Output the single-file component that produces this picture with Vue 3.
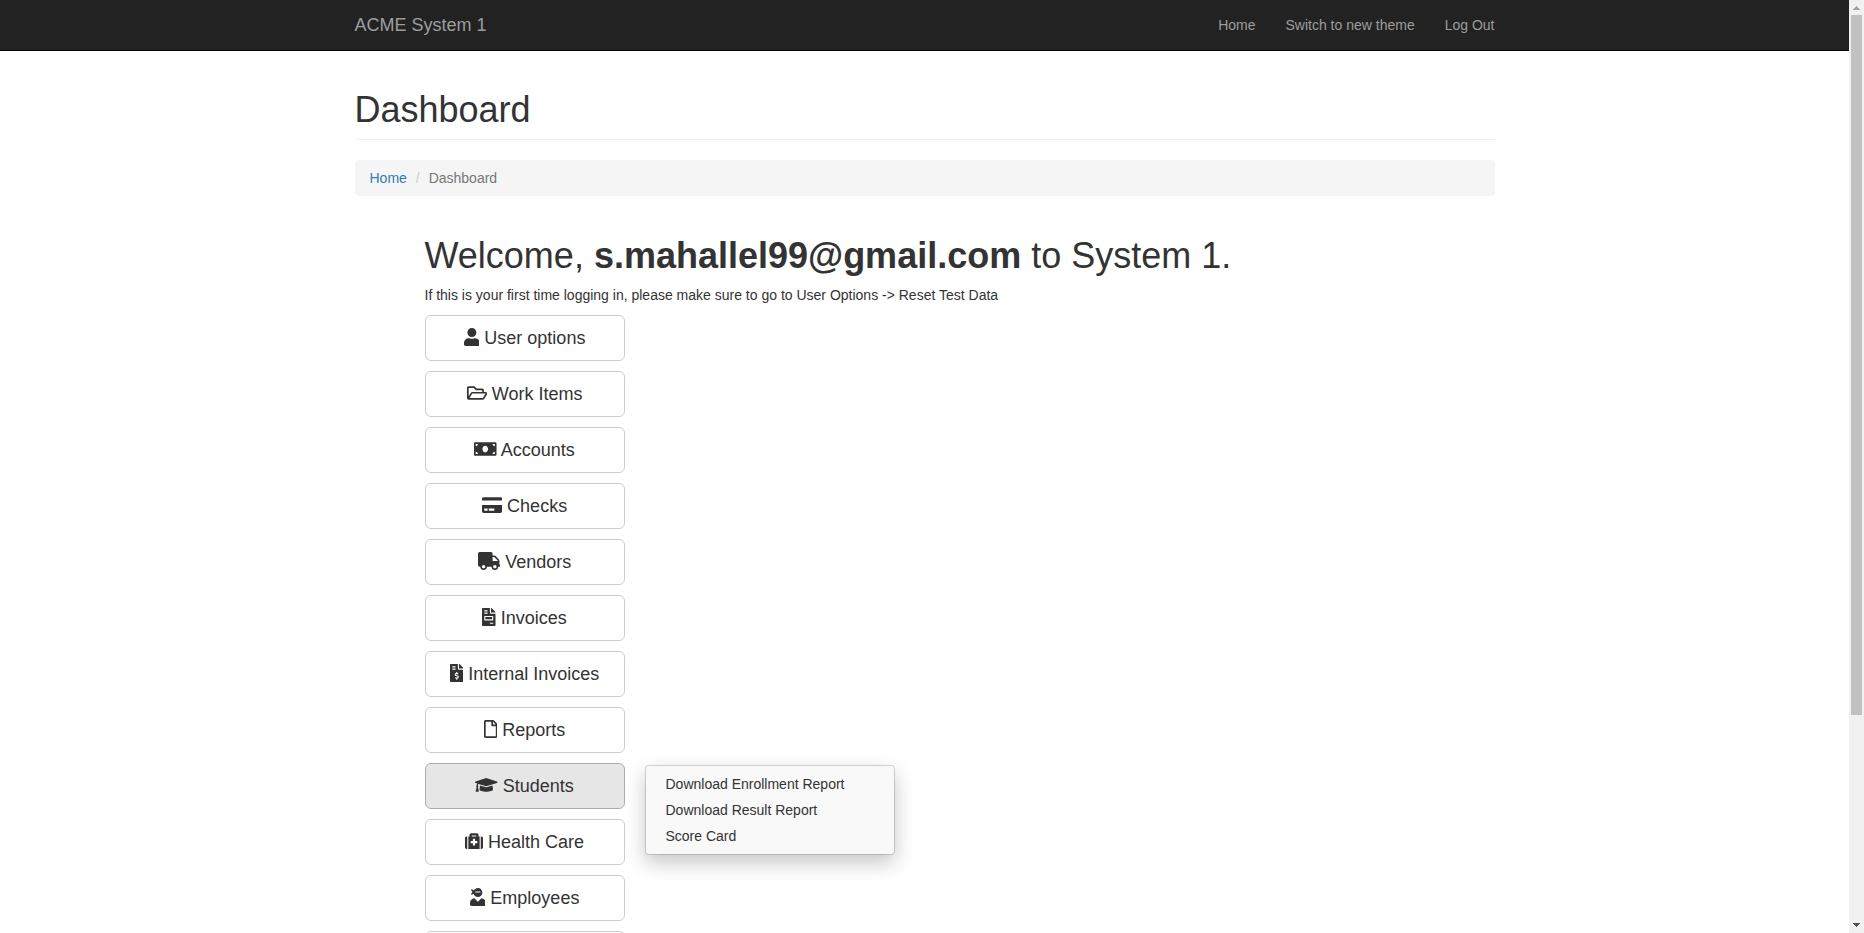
<script setup>
const navLinks = ['Home', 'Switch to new theme', 'Log Out']

const reports = ['Download Enrollment Report', 'Download Result Report', 'Score Card']

const sections = [
  {
    label: 'User options',
    width: 448,
    path: 'M224 256c70.7 0 128-57.3 128-128S294.7 0 224 0 96 57.3 96 128s57.3 128 128 128zm89.6 32h-16.7c-22.2 10.2-46.9 16-72.9 16s-50.6-5.8-72.9-16h-16.7C60.2 288 0 348.2 0 422.4V464c0 26.5 21.5 48 48 48h352c26.5 0 48-21.5 48-48v-41.6c0-74.2-60.2-134.4-134.4-134.4z',
  },
  {
    label: 'Work Items',
    width: 576,
    path: 'M527.9 224H480v-48c0-26.5-21.5-48-48-48H272l-64-64H48C21.5 64 0 85.5 0 112v288c0 26.5 21.5 48 48 48h400c16.5 0 31.9-8.5 40.7-22.6l79.9-128c20-31.9-3-73.4-40.7-73.4zM48 118c0-3.3 2.7-6 6-6h134.1l64 64H426c3.3 0 6 2.7 6 6v42H152c-16.8 0-32.4 8.8-41.1 23.2L48 351.4zm400 282H72l77.2-128H528z',
  },
  {
    label: 'Accounts',
    width: 640,
    path: 'M608 64H32C14.33 64 0 78.33 0 96v320c0 17.67 14.33 32 32 32h576c17.67 0 32-14.33 32-32V96c0-17.67-14.33-32-32-32zM48 400v-64c35.35 0 64 28.65 64 64H48zm0-224v-64h64c0 35.35-28.65 64-64 64zm272 176c-44.19 0-80-42.99-80-96 0-53.02 35.82-96 80-96s80 42.98 80 96c0 53.03-35.83 96-80 96zm272 48h-64c0-35.35 28.65-64 64-64v64zm0-224c-35.35 0-64-28.65-64-64h64v64z',
  },
  {
    label: 'Checks',
    width: 576,
    path: 'M0 432c0 26.5 21.5 48 48 48h480c26.5 0 48-21.5 48-48V256H0v176zm192-68c0-6.6 5.4-12 12-12h136c6.6 0 12 5.4 12 12v40c0 6.6-5.4 12-12 12H204c-6.6 0-12-5.4-12-12v-40zm-128 0c0-6.6 5.4-12 12-12h72c6.6 0 12 5.4 12 12v40c0 6.6-5.4 12-12 12H76c-6.6 0-12-5.4-12-12v-40zM576 80v48H0V80c0-26.5 21.5-48 48-48h480c26.5 0 48 21.5 48 48z',
  },
  {
    label: 'Vendors',
    width: 640,
    path: 'M624 352h-16V243.9c0-12.7-5.1-24.9-14.1-33.9L494 110.1c-9-9-21.2-14.1-33.9-14.1H416V48c0-26.5-21.5-48-48-48H48C21.5 0 0 21.5 0 48v320c0 26.5 21.5 48 48 48h16c0 53 43 96 96 96s96-43 96-96h128c0 53 43 96 96 96s96-43 96-96h48c8.8 0 16-7.2 16-16v-32c0-8.8-7.2-16-16-16zM160 464c-26.5 0-48-21.5-48-48s21.5-48 48-48 48 21.5 48 48-21.5 48-48 48zm320 0c-26.5 0-48-21.5-48-48s21.5-48 48-48 48 21.5 48 48-21.5 48-48 48zm80-208H416V144h44.1l99.9 99.9V256z',
  },
  {
    label: 'Invoices',
    width: 384,
    path: 'M288 256H96v64h192v-64zm89-151L279.1 7c-4.5-4.5-10.6-7-17-7H256v128h128v-6.1c0-6.3-2.5-12.4-7-16.9zm-153 31V0H24C10.7 0 0 10.7 0 24v464c0 13.3 10.7 24 24 24h336c13.3 0 24-10.7 24-24V160H248c-13.2 0-24-10.8-24-24zM64 72c0-4.42 3.58-8 8-8h80c4.42 0 8 3.58 8 8v16c0 4.42-3.58 8-8 8H72c-4.42 0-8-3.58-8-8V72zm0 64c0-4.42 3.58-8 8-8h80c4.42 0 8 3.58 8 8v16c0 4.42-3.58 8-8 8H72c-4.42 0-8-3.58-8-8v-16zm256 304c0 4.42-3.58 8-8 8h-80c-4.42 0-8-3.58-8-8v-16c0-4.42 3.58-8 8-8h80c4.42 0 8 3.58 8 8v16zm0-200v96c0 8.84-7.16 16-16 16H80c-8.84 0-16-7.16-16-16v-96c0-8.84 7.16-16 16-16h224c8.84 0 16 7.16 16 16z',
  },
  {
    label: 'Internal Invoices',
    width: 384,
    path: 'M377 105L279.1 7c-4.5-4.5-10.6-7-17-7H256v128h128v-6.1c0-6.3-2.5-12.4-7-16.9zm-153 31V0H24C10.7 0 0 10.7 0 24v464c0 13.3 10.7 24 24 24h336c13.3 0 24-10.7 24-24V160H248c-13.2 0-24-10.8-24-24zM64 72c0-4.42 3.58-8 8-8h80c4.42 0 8 3.58 8 8v16c0 4.42-3.58 8-8 8H72c-4.42 0-8-3.58-8-8V72zm0 80v-16c0-4.42 3.58-8 8-8h80c4.42 0 8 3.58 8 8v16c0 4.42-3.58 8-8 8H72c-4.42 0-8-3.58-8-8zm144 263.88V440c0 4.42-3.58 8-8 8h-16c-4.42 0-8-3.58-8-8v-24.29c-11.29-.58-22.27-4.52-31.37-11.35-3.9-2.93-4.1-8.77-.57-12.14l11.75-11.21c2.77-2.64 6.89-2.76 10.13-.73 3.87 2.42 8.26 3.72 12.82 3.72h28.11c6.5 0 11.8-5.92 11.8-13.19 0-5.95-3.61-11.19-8.77-12.73l-45-13.5c-18.59-5.58-31.58-23.42-31.58-43.39 0-24.52 19.05-44.44 42.67-45.07V232c0-4.42 3.58-8 8-8h16c4.42 0 8 3.58 8 8v24.29c11.29.58 22.27 4.51 31.37 11.35 3.9 2.93 4.1 8.77.57 12.14l-11.75 11.21c-2.77 2.64-6.89 2.76-10.13.73-3.87-2.43-8.26-3.72-12.82-3.72h-28.11c-6.5 0-11.8 5.92-11.8 13.19 0 5.95 3.61 11.19 8.77 12.73l45 13.5c18.59 5.58 31.58 23.42 31.58 43.39 0 24.53-19.05 44.44-42.67 45.07z',
  },
  {
    label: 'Reports',
    width: 384,
    path: 'M369.9 97.9L286 14C277 5 264.8-.1 252.1-.1H48C21.5 0 0 21.5 0 48v416c0 26.5 21.5 48 48 48h288c26.5 0 48-21.5 48-48V131.9c0-12.7-5.1-25-14.1-34zM332.1 128H256V51.9l76.1 76.1zM48 464V48h160v104c0 13.3 10.7 24 24 24h104v288H48z',
  },
  {
    label: 'Students',
    width: 640,
    path: 'M622.34 153.2L343.4 67.5c-15.2-4.67-31.6-4.67-46.79 0L17.66 153.2c-23.54 7.23-23.54 38.36 0 45.59l48.63 14.94c-10.67 13.19-17.23 29.28-17.88 46.9C38.78 266.15 32 276.11 32 288c0 10.78 5.68 19.85 13.86 25.65L20.33 428.53C18.11 438.52 25.71 448 35.94 448h56.11c10.24 0 17.84-9.48 15.62-19.47L82.14 313.65C90.32 307.85 96 298.78 96 288c0-11.57-6.47-21.25-15.66-26.87.76-15.02 8.44-28.3 20.69-36.72L296.6 284.5c9.06 2.78 26.44 6.25 46.79 0l278.95-85.7c23.55-7.24 23.55-38.36 0-45.6zM352.79 315.09c-28.53 8.76-52.84 3.92-65.59 0l-145.02-44.55L128 384c0 35.35 85.96 64 192 64s192-28.65 192-64l-14.18-113.47-145.03 44.56z',
    items: reports,
  },
  {
    label: 'Health Care',
    width: 512,
    path: 'M96 480h320V128h-32V80c0-26.51-21.49-48-48-48H176c-26.51 0-48 21.49-48 48v48H96v352zm96-384h128v32H192V96zm320 80v256c0 26.51-21.49 48-48 48h-16V128h16c26.51 0 48 21.49 48 48zM64 480H48c-26.51 0-48-21.49-48-48V176c0-26.51 21.49-48 48-48h16v352zm288-208v32c0 8.837-7.163 16-16 16h-48v48c0 8.837-7.163 16-16 16h-32c-8.837 0-16-7.163-16-16v-48h-48c-8.837 0-16-7.163-16-16v-32c0-8.837 7.163-16 16-16h48v-48c0-8.837 7.163-16 16-16h32c8.837 0 16 7.163 16 16v48h48c8.837 0 16 7.163 16 16z',
  },
  {
    label: 'Employees',
    width: 448,
    path: 'M325.4 289.2L224 390.6 122.6 289.2C54 295.3 0 352.2 0 422.4v41.6c0 26.5 21.5 48 48 48h352c26.5 0 48-21.5 48-48v-41.6c0-70.2-54-127.1-122.6-133.2zM32 192c27.3 0 51.8-11.5 69.2-29.7 15.1 53.9 64 93.7 122.8 93.7 70.7 0 128-57.3 128-128S294.7 0 224 0c-50.4 0-93.6 29.4-114.5 71.8C92.1 47.8 64 32 32 32c0 33.4 17.1 62.8 43.1 80-26 17.2-43.1 46.6-43.1 80zm144-96h96c17.7 0 32 14.3 32 32H144c0-17.7 14.3-32 32-32z',
  },
]
</script>

<template>
  <div class="shell">
    <div class="page">
      <header class="navbar">
        <nav class="container navbar-row" aria-label="Main">
          <a class="brand" href="#">ACME System 1</a>
          <ul class="nav">
            <li v-for="link in navLinks" :key="link"><a href="#">{{ link }}</a></li>
          </ul>
        </nav>
      </header>

      <main class="container content">
        <h1 class="page-title">Dashboard</h1>
        <ol class="breadcrumb">
          <li><a href="#">Home</a></li>
          <li class="current">Dashboard</li>
        </ol>

        <section class="welcome">
          <h1>Welcome, <strong>s.mahallel99@gmail.com</strong> to System 1.</h1>
          <p>If this is your first time logging in, please make sure to go to User Options -&gt; Reset Test Data</p>

          <div class="sections">
            <div v-for="s in sections" :key="s.label" class="dropdown">
              <button type="button" class="btn" :class="{ open: s.items }">
                <svg class="icon" :viewBox="`0 0 ${s.width} 512`" aria-hidden="true"><path :d="s.path" /></svg>
                {{ s.label }}
              </button>
              <ul v-if="s.items" class="menu">
                <li v-for="item in s.items" :key="item"><a href="#">{{ item }}</a></li>
              </ul>
            </div>
            <div class="dropdown">
              <button type="button" class="btn" aria-label="More"></button>
            </div>
          </div>
        </section>
      </main>
    </div>

    <div class="scrollbar" aria-hidden="true">
      <svg class="arrow" viewBox="0 0 15 15"><path d="M4 10h7v-1h-1v-1h-1v-1h-1v-1h-1v1h-1v1h-1v1h-1z" fill="#a3a3a3" /></svg>
      <div class="track"><div class="thumb"></div></div>
      <svg class="arrow" viewBox="0 0 15 15"><path d="M4 5h7v1h-1v1h-1v1h-1v1h-1v-1h-1v-1h-1v-1h-1z" fill="#505050" /></svg>
    </div>
  </div>
</template>

<style>
body {
  margin: 0;
  background: #fff;
}
</style>

<style scoped>
.shell {
  display: flex;
  height: 100vh;
  overflow: hidden;
  font-family: "Helvetica Neue", Helvetica, "Liberation Sans", Arial, sans-serif;
  font-size: 14px;
  line-height: 20px;
  color: #333;
}
.shell * {
  box-sizing: border-box;
}
.page {
  flex: 1;
  min-width: 0;
  overflow: hidden;
}
.container {
  max-width: 1170px;
  margin: 0 auto;
  padding: 0 15px;
}
a {
  text-decoration: none;
}
ul,
ol {
  margin: 0;
  padding: 0;
  list-style: none;
}

.navbar {
  background: #222;
  border-bottom: 1px solid #080808;
}
.navbar-row {
  display: flex;
  justify-content: space-between;
}
.brand {
  padding: 15px 0;
  font-size: 18px;
  color: #9d9d9d;
}
.nav {
  display: flex;
  gap: 30px;
}
.nav a {
  display: block;
  padding: 15px 0;
  color: #9d9d9d;
}

.content {
  padding-top: 39px;
}
h1 {
  margin: 0;
  font-size: 36px;
  line-height: 40px;
  font-weight: 400;
}
.page-title {
  padding-bottom: 9px;
  border-bottom: 1px solid #eee;
}
.breadcrumb {
  display: flex;
  margin: 20px 0 40px;
  padding: 8px 15px;
  background: #f5f5f5;
  border-radius: 4px;
}
.breadcrumb a {
  color: #337ab7;
}
.breadcrumb .current {
  color: #777;
}
.breadcrumb .current::before {
  content: "/\00a0";
  padding: 0 5px 0 9px;
  color: #ccc;
}

.welcome {
  padding: 0 70px;
}
.welcome p {
  margin: 9px 0 10px;
}
.sections {
  display: flex;
  flex-direction: column;
  gap: 10px;
  width: 200px;
}
.dropdown {
  position: relative;
}
.btn {
  display: block;
  width: 100%;
  min-height: 46px;
  padding: 10px 16px;
  border: 1px solid #ccc;
  border-radius: 6px;
  background: #fff;
  font-family: inherit;
  font-size: 18px;
  line-height: 24px;
  color: #333;
}
.btn.open {
  background: #e6e6e6;
  border-color: #adadad;
}
.icon {
  height: 18px;
  vertical-align: -2px;
  fill: currentColor;
}
.menu {
  position: absolute;
  top: 2px;
  left: 220px;
  width: 250px;
  padding: 5px 0;
  background: #f9f9f9;
  background-clip: padding-box;
  border: 1px solid rgba(0, 0, 0, 0.15);
  border-radius: 4px;
  box-shadow: 0 8px 20px 0 rgba(0, 0, 0, 0.22);
}
.menu a {
  display: block;
  padding: 3px 20px;
  color: #333;
}

.scrollbar {
  display: flex;
  flex: none;
  flex-direction: column;
  width: 15px;
  background: #f1f1f1;
}
.arrow {
  width: 15px;
  height: 15px;
}
.track {
  flex: 1;
  padding: 0 2px;
}
.thumb {
  height: 77.5%;
  background: #c1c1c1;
}
</style>
